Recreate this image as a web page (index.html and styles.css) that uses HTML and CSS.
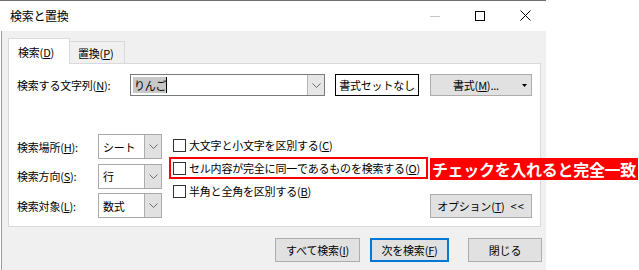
FILE: index.html
```html
<!DOCTYPE html>
<html lang="ja">
<head>
    <meta charset="UTF-8">
    <title>検索と置換</title>
    <link rel="stylesheet" href="styles.css">
</head>
<body>
    <div class="window">
        <div class="titlebar">
            <span class="title">検索と置換</span>
            <div class="controls">
                <svg width="10" height="10" viewBox="0 0 10 10"><line x1="0" y1="5.5" x2="10" y2="5.5" stroke="#c6c6c6" stroke-width="1"/></svg>
                <svg width="10" height="10" viewBox="0 0 10 10"><rect x="0.5" y="0.5" width="9" height="9" fill="none" stroke="#000" stroke-width="1"/></svg>
                <svg width="11" height="11" viewBox="0 0 11 11"><path d="M0.5 0.5 L10.5 10.5 M10.5 0.5 L0.5 10.5" stroke="#000" stroke-width="1"/></svg>
            </div>
        </div>

        <div class="client">
            <div class="tabs">
                <div class="tab active">検索(<u>D</u>)</div>
                <div class="tab">置換(<u>P</u>)</div>
            </div>

            <div class="panel">
                <div class="find-row">
                    <span class="lbl find-lbl">検索する文字列(<u>N</u>):</span>
                    <div class="combo find-combo">
                        <span class="value"><span class="hl">りんご</span><span class="caret"></span></span>
                        <span class="drop"><svg width="9" height="5" viewBox="0 0 9 5"><path d="M0.5 0.5 L4.5 4.5 L8.5 0.5" fill="none" stroke="#6d6d6d" stroke-width="1"/></svg></span>
                    </div>
                    <button class="btn btn-clear">書式セットなし</button>
                    <button class="btn btn-format">
                        <span>書式(<u>M</u>)...</span>
                        <svg width="5" height="3" viewBox="0 0 5 3"><path d="M0 0 H5 L2.5 3 Z" fill="#000"/></svg>
                    </button>
                </div>

                <div class="opts">
                    <div class="selects">
                        <div class="sel-row">
                            <span class="lbl">検索場所(<u>H</u>):</span>
                            <div class="combo small"><span class="value">シート</span><span class="drop"><svg width="9" height="5" viewBox="0 0 9 5"><path d="M0.5 0.5 L4.5 4.5 L8.5 0.5" fill="none" stroke="#6d6d6d" stroke-width="1"/></svg></span></div>
                        </div>
                        <div class="sel-row">
                            <span class="lbl">検索方向(<u>S</u>):</span>
                            <div class="combo small"><span class="value">行</span><span class="drop"><svg width="9" height="5" viewBox="0 0 9 5"><path d="M0.5 0.5 L4.5 4.5 L8.5 0.5" fill="none" stroke="#6d6d6d" stroke-width="1"/></svg></span></div>
                        </div>
                        <div class="sel-row">
                            <span class="lbl">検索対象(<u>L</u>):</span>
                            <div class="combo small"><span class="value">数式</span><span class="drop"><svg width="9" height="5" viewBox="0 0 9 5"><path d="M0.5 0.5 L4.5 4.5 L8.5 0.5" fill="none" stroke="#6d6d6d" stroke-width="1"/></svg></span></div>
                        </div>
                    </div>

                    <div class="checks">
                        <div class="check"><span class="box"></span>大文字と小文字を区別する(<u>C</u>)</div>
                        <div class="check marked">
                            <span class="box"></span>セル内容が完全に同一であるものを検索する(<u>O</u>)
                            <span class="note">チェックを入れると完全一致</span>
                        </div>
                        <div class="check"><span class="box"></span>半角と全角を区別する(<u>B</u>)</div>
                    </div>

                    <button class="btn btn-options">オプション(<u>T</u>)<span class="arrows">&lt;&lt;</span></button>
                </div>
            </div>

            <div class="actions">
                <button class="btn btn-all">すべて検索(<u>I</u>)</button>
                <button class="btn btn-next">次を検索(<u>F</u>)</button>
                <button class="btn btn-close">閉じる</button>
            </div>
        </div>
    </div>
</body>
</html>
```

FILE: styles.css
```css
*{
    margin: 0;
    padding: 0;
    box-sizing: border-box;
}

body{
    width: 639px;
    height: 270px;
    background-color: #fff;
    color: #000;
    font-family: "Noto Sans CJK JP", "Noto Sans", sans-serif;
    font-size: 11px;
    letter-spacing: -0.2px;
    overflow: hidden;
}

u{
    text-decoration-thickness: 1px;
    text-underline-offset: 1px;
}

.window{
    width: 546px;
    height: 270px;
    border-top: 1px solid #6f6f6f;
    display: flex;
    flex-direction: column;
}

.titlebar{
    height: 30px;
    display: flex;
    align-items: center;
    justify-content: space-between;
    padding-left: 10px;
    padding-bottom: 1px;
    background-color: #fff;
}

.title{
    font-size: 12px;
    letter-spacing: -0.3px;
}

.controls{
    display: flex;
    align-items: center;
    gap: 35px;
    margin-right: 15px;
}

.controls svg{
    display: block;
}

.client{
    flex-grow: 1;
    margin-left: 1px;
    border-left: 1px solid #9a9a9a;
    background-color: #f0f0f0;
    padding: 7px 4px 0 6px;
}

/* tabs */
.tabs{
    display: flex;
    align-items: flex-end;
    height: 25px;
    position: relative;
    z-index: 1;
}

.tab{
    height: 22px;
    display: flex;
    align-items: center;
    padding: 0 8px;
    border: 1px solid #d9d9d9;
    border-bottom: none;
    background-color: #f0f0f0;
}

.tab.active{
    height: 26px;
    width: 62px;
    padding-left: 9px;
    padding-top: 1px;
    background-color: #fff;
    margin-bottom: -1px;
}

.tab + .tab{
    border-left: none;
    width: 55px;
}

.panel{
    width: 533px;
    height: 164px;
    background-color: #fff;
    border: 1px solid #d9d9d9;
    padding: 10px 8px 9px 8px;
    display: flex;
    flex-direction: column;
}

.lbl{
    white-space: nowrap;
}

.find-row{
    display: flex;
    align-items: center;
    height: 22px;
}

.find-lbl{
    width: 113px;
}

.combo{
    display: flex;
    border: 1px solid #7a7a7a;
    background-color: #fff;
}

.combo .value{
    flex-grow: 1;
    display: flex;
    align-items: center;
    padding-left: 2px;
}

.combo .drop{
    display: flex;
    align-items: center;
    justify-content: center;
    background-color: #e6e6e6;
    border-left: 1px solid #b4b4b4;
}

.find-combo{
    width: 195px;
    height: 22px;
}

.find-combo .drop{
    width: 17px;
}

.hl{
    background-color: #c8c8c8;
    line-height: 16px;
    padding-left: 1px;
}

.caret{
    width: 1px;
    height: 16px;
    background-color: #000;
}

.btn{
    font-family: inherit;
    font-size: 11px;
    letter-spacing: -0.2px;
    color: #000;
    background-color: #e1e1e1;
    border: 1px solid #adadad;
    height: 24px;
    display: flex;
    align-items: center;
    justify-content: center;
}

.btn-clear{
    width: 84px;
    height: 22px;
    margin-left: 10px;
    background-color: #fff;
    border-color: #000;
}

.btn-format{
    width: 102px;
    height: 22px;
    margin-left: 11px;
    justify-content: space-between;
    padding: 0 4px 0 22px;
}

/* lower options */
.opts{
    display: flex;
    margin-top: 38px;
    flex-grow: 1;
}

.selects{
    display: flex;
    flex-direction: column;
    gap: 4.5px;
}

.sel-row{
    display: flex;
    align-items: center;
    height: 25px;
}

.sel-row .lbl{
    width: 81px;
}

.combo.small{
    width: 64px;
    height: 25px;
    border-color: #a9a9a9;
}

.combo.small .value{
    padding-left: 4px;
}

.combo.small .drop{
    width: 17px;
    background-color: #e1e1e1;
    border-left-color: #adadad;
}

.checks{
    display: flex;
    flex-direction: column;
    gap: 1px;
    margin-left: 7px;
    align-items: flex-start;
}

.check{
    height: 22px;
    display: flex;
    align-items: center;
    padding: 0 6px 0 2px;
    border: 2px solid transparent;
    white-space: nowrap;
}

.check.marked{
    border-color: #ff0000;
    position: relative;
}

.box{
    width: 13px;
    height: 13px;
    border: 1px solid #333;
    background-color: #fff;
    margin-right: 3px;
}

.note{
    position: absolute;
    left: calc(100% + 4px);
    top: -1px;
    height: 22px;
    width: 208px;
    display: flex;
    align-items: center;
    padding-left: 2px;
    background-color: #ff0000;
    color: #fff;
    font-size: 16px;
    font-weight: 700;
    letter-spacing: -0.3px;
}

.btn-options{
    width: 102px;
    margin-left: auto;
    align-self: flex-end;
}

.arrows{
    margin-left: 6px;
    letter-spacing: 1px;
}

/* bottom buttons */
.actions{
    display: flex;
    justify-content: flex-end;
    margin-top: 11px;
}

.btn-all{
    width: 85px;
}

.btn-next{
    width: 79px;
    margin-left: 10px;
    border: 2px solid #0078d7;
}

.btn-close{
    width: 74px;
    margin-left: 19px;
}
```
